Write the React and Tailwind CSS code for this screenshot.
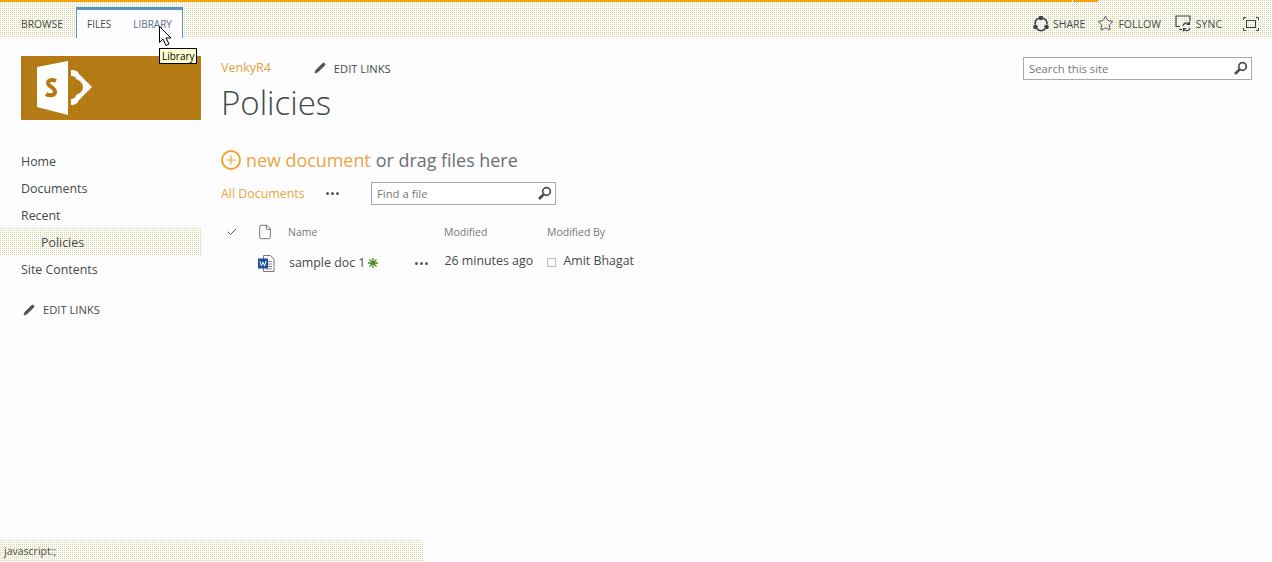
import { Pencil, Star, Check, File, Plus } from "lucide-react";

// gif style dither, yellow and lavender dots on a 4px tile
const dither =
  "bg-[#fdfdf8] bg-[conic-gradient(at_1px_1px,transparent_75%,#e4d96e_0),conic-gradient(at_1px_1px,transparent_75%,#e4d96e_0),conic-gradient(at_1px_1px,transparent_75%,#ccccea_0),conic-gradient(at_1px_1px,transparent_75%,#ccccea_0)] bg-[length:4px_4px] bg-[position:0_0,2px_2px,2px_0,0_2px]";
const links = ["Home", "Documents", "Recent"];

function SharePointLogo() {
  return (
    <svg width="180" height="64" viewBox="0 0 180 64">
      <path d="M16 11 L47 5 V59 L16 51 Z" fill="#fff" />
      <path d="M35 25 C31 23 27 24 27 27 C27 31 34 31 34 36 C34 40 28 40 25 38" fill="none" stroke="#b87a0e" strokeWidth="4" />
      <path d="M50 14 C54 14 57 15 58 18 L71 31 L58 44 C57 47 54 49 50 49 V43 C53 43 55 41 55 39 C60 37 62 34 62 31 C62 28 60 25 55 23 C55 21 53 20 50 20 Z" fill="#fff" />
    </svg>
  );
}

function ShareIcon() {
  return (
    <svg width="16" height="16" viewBox="0 0 16 16" fill="none" stroke="#3f4348" strokeWidth="1.7">
      <path d="M6 2.2 A6 6 0 0 0 2 8.5" />
      <path d="M10 2.2 A6 6 0 0 1 14 8.5" />
      <path d="M4 13 A6 6 0 0 0 12 13" />
      <circle cx="8" cy="2" r="1.5" fill="#3f4348" />
      <circle cx="2.5" cy="11" r="1.5" fill="#3f4348" />
      <circle cx="13.5" cy="11" r="1.5" fill="#3f4348" />
    </svg>
  );
}

function SyncIcon() {
  return (
    <svg width="18" height="17" viewBox="0 0 18 17" fill="none" stroke="#3f4348" strokeWidth="1.2">
      <path d="M5 11.5 H1 V1 H15 V6" />
      <path d="M4 14.5 H7" />
      <path d="M8 11 A3.5 3.5 0 0 1 14 9" />
      <path d="M14.5 6.5 V9.5 H11.5" />
      <path d="M15 13 A3.5 3.5 0 0 1 9 14.5" />
      <path d="M8.5 16.5 V13.5 H11.5" />
    </svg>
  );
}

function FocusIcon() {
  return (
    <svg width="16" height="14" viewBox="0 0 16 14" fill="none" stroke="#3f4348" strokeWidth="1">
      <rect x="3.5" y="3.5" width="9" height="7" />
      <path d="M0.5 3 V0.5 H3 M13 0.5 H15.5 V3 M15.5 11 V13.5 H13 M3 13.5 H0.5 V11" />
    </svg>
  );
}

function SearchIcon() {
  return (
    <svg width="15" height="15" viewBox="0 0 15 15" fill="none" stroke="#4a4e52">
      <circle cx="9.5" cy="5.5" r="3.8" strokeWidth="1.7" />
      <path d="M6.5 8.5 L2 13" strokeWidth="2.6" />
    </svg>
  );
}

function WordIcon() {
  return (
    <svg width="17" height="17" viewBox="0 0 17 17" fill="none">
      <path d="M5.5 0.5 H12.5 L16 4 V16.5 H5.5 Z" fill="#fff" stroke="#777" />
      <path d="M8 6.5 H14 M8 9 H14 M8 11.5 H14 M8 14 H14" stroke="#7f8a99" />
      <rect x="0" y="3.5" width="10" height="10" fill="#1f4f9c" />
      <path d="M2 6 L3.4 11 L5 7 L6.6 11 L8 6" stroke="#fff" strokeWidth="1" />
    </svg>
  );
}

function NewBadge() {
  return (
    <svg width="10" height="10" viewBox="0 0 10 10" stroke="#4d8a1f" strokeWidth="1.3">
      <path d="M5 0 V10 M0 5 H10 M1.5 1.5 L8.5 8.5 M8.5 1.5 L1.5 8.5" />
    </svg>
  );
}

function Dots() {
  return (
    <span className="flex gap-[2px]">
      <span className="h-[3px] w-[3px] rounded-full bg-[#555a60]" />
      <span className="h-[3px] w-[3px] rounded-full bg-[#555a60]" />
      <span className="h-[3px] w-[3px] rounded-full bg-[#555a60]" />
    </span>
  );
}

function SearchBox({ placeholder, className }) {
  return (
    <div className={`flex items-center justify-between border border-[#a9a9b0] bg-white pl-[5px] pr-[3px] ${className}`}>
      <span className="translate-y-px text-[11.3px] text-[#777]">{placeholder}</span>
      <SearchIcon />
    </div>
  );
}

export default function App() {
  return (
    <div className="relative h-[562px] w-[1272px] overflow-hidden bg-[#fdfdff] font-['Open_Sans',sans-serif] text-[#474a44]">
      {/* Ribbon */}
      <div className={`h-[38px] ${dither}`}>
        <div className="flex h-[2px] w-[1098px] bg-[#f7a30c]">
          <div className="ml-auto mr-[25px] w-px bg-white" />
        </div>
        <div className="flex h-[36px] items-start pl-[10px]">
          <div className="mt-[14px] w-[66px] pl-[11px] text-[10.3px] leading-[16px]">BROWSE</div>
          <div className="mt-[5px] flex h-[31px] w-[107px] border-x border-t-[3px] border-[#5b93c9] bg-[#fdfdff] text-[10px]">
            <span className="ml-[10px] mt-[6px] leading-[16px]">FILES</span>
            <span className="ml-[22px] mt-[6px] leading-[16px] text-[#5c6f8c]">LIBRARY</span>
          </div>
          <div className="ml-auto mr-[13px] mt-[13px] flex items-center text-[10.5px] leading-[16px]">
            <ShareIcon />
            <span className="ml-[4px]">SHARE</span>
            <Star size={17} strokeWidth={1.3} className="ml-[12px] text-[#3f4348]" />
            <span className="ml-[4px]">FOLLOW</span>
            <span className="ml-[14px]"><SyncIcon /></span>
            <span className="ml-[3px]">SYNC</span>
            <span className="ml-[21px]"><FocusIcon /></span>
          </div>
        </div>
      </div>

      <div className="flex">
        {/* Left column */}
        <div className="w-[201px] shrink-0 pt-[18px]">
          <div className="ml-[21px] h-[64px] w-[180px] overflow-hidden bg-[#bb8012] bg-[conic-gradient(at_1px_1px,transparent_75%,#a06c1c_0)] bg-[length:2px_2px]">
            <SharePointLogo />
          </div>
          <nav className="mt-[28px] text-[12.4px] leading-[27px]">
            {links.map((l) => (
              <div key={l} className="pl-[21px]">{l}</div>
            ))}
            {/* starts on an even row so the dither lines up with the ribbon */}
            <div className={`-mt-px pl-[41px] pt-[2px] leading-[25px] ${dither}`}>Policies</div>
            <div className="mt-px pl-[21px]">Site Contents</div>
          </nav>
          <div className="mt-[13px] flex items-center pl-[23px] text-[11.2px] leading-[27px]">
            <Pencil size={12} fill="#555" strokeWidth={1.5} className="text-[#555]" />
            <span className="ml-[8px]">EDIT LINKS</span>
          </div>
        </div>

        {/* Main column */}
        <div className="flex-1 pl-[20px] pr-[20px] pt-[20px]">
          <div className="flex items-start justify-between">
            <div>
              <div className="flex items-center text-[12.5px] leading-[20px]">
                <span className="text-[#e0a040]">VenkyR4</span>
                <Pencil size={12} fill="#555" strokeWidth={1.5} className="ml-[43px] text-[#555]" />
                <span className="ml-[8px] translate-y-px text-[11.2px]">EDIT LINKS</span>
              </div>
              <h1 className="mt-[3px] text-[33px] font-light leading-[44px] text-[#3d4a45]">Policies</h1>
            </div>
            <SearchBox placeholder="Search this site" className="mt-[-1px] h-[23px] w-[229px]" />
          </div>

          <div className="mt-[22px] flex items-center text-[17.9px] leading-[26px]">
            <span className="flex h-[20px] w-[20px] items-center justify-center rounded-full border-2 border-[#eda72c]">
              <Plus size={14} strokeWidth={2} className="text-[#eda72c]" />
            </span>
            <span className="ml-[5px] text-[#eba53a]">new document</span>
            <span className="ml-[5px] text-[#6a6f70]">or drag files here</span>
          </div>

          <div className="mt-[9px] flex items-center text-[12.4px]">
            <span className="w-[105px] translate-y-px text-[#eba53a]">All Documents</span>
            <Dots />
            <SearchBox placeholder="Find a file" className="ml-[32px] h-[23px] w-[185px]" />
          </div>

          <div className="mt-[15px] flex h-[24px] items-center text-[10.5px] text-[#777]">
            <Check size={12} strokeWidth={2} className="ml-[5px] text-[#555]" />
            <File size={16} strokeWidth={1.2} className="ml-[19px] text-[#555]" />
            <span className="ml-[15px] w-[156px] translate-y-px">Name</span>
            <span className="w-[103px] translate-y-px">Modified</span>
            <span className="translate-y-px">Modified By</span>
          </div>

          <div className="mt-[7px] flex h-[24px] items-center text-[12.4px]">
            <span className="ml-[37px]"><WordIcon /></span>
            <span className="ml-[14px]">sample doc 1</span>
            <span className="ml-[3px]"><NewBadge /></span>
            <span className="ml-[37px]"><Dots /></span>
            <span className="ml-[16px] w-[103px] -translate-y-[2px]">26 minutes ago</span>
            <span className="h-[9px] w-[9px] -translate-y-[1px] border border-[#bbb]" />
            <span className="ml-[7px] -translate-y-[2px]">Amit Bhagat</span>
          </div>
        </div>
      </div>

      {/* Tooltip and pointer over the ribbon */}
      <div className="absolute left-[159px] top-[48px] w-[38px] border border-black bg-[#ffffd0] pl-[2px] text-[10px] leading-[14px] text-black">
        Library
      </div>
      <svg width="14" height="21" viewBox="0 0 14 21" className="absolute left-[159px] top-[26px]">
        <path d="M0.5 0.5 V16.5 L4 13 L7 19.5 L10 18 L7 12 H12 Z" fill="#fff" stroke="#000" />
      </svg>

      {/* Browser status bar, one row taller at the top keeps the dither phase */}
      <div className={`absolute bottom-px left-0 h-[21px] w-[423px] rounded-tr-[3px] pl-[4px] pt-px text-[10.5px] leading-[20px] ${dither}`}>
        javascript:;
      </div>
    </div>
  );
}
